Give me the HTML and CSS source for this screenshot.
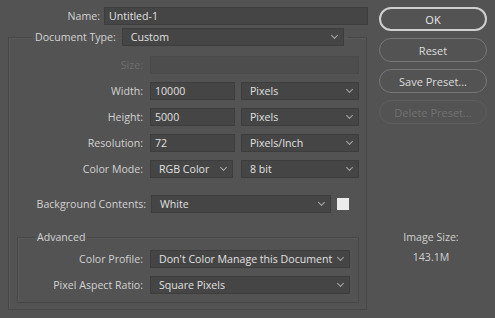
FILE: index.html
```html
<!DOCTYPE html>
<html lang="en">
<head>
    <meta charset="UTF-8">
    <title>New Document</title>
    <link rel="stylesheet" href="styles.css">
</head>
<body>
    <div class="dialog">
        <div class="main">
            <div class="name-row">
                <span class="label">Name:</span>
                <div class="field">Untitled-1</div>
            </div>
            <fieldset class="group">
                <legend class="group-title">
                    <span class="label">Document Type:</span>
                    <div class="select doc-type">Custom</div>
                </legend>
                <div class="row">
                    <span class="label disabled">Size:</span>
                    <div class="field disabled wide"></div>
                </div>
                <div class="row">
                    <span class="label">Width:</span>
                    <div class="field small">10000</div>
                    <div class="select unit">Pixels</div>
                </div>
                <div class="row">
                    <span class="label">Height:</span>
                    <div class="field small">5000</div>
                    <div class="select unit">Pixels</div>
                </div>
                <div class="row">
                    <span class="label">Resolution:</span>
                    <div class="field small">72</div>
                    <div class="select unit">Pixels/Inch</div>
                </div>
                <div class="row">
                    <span class="label">Color Mode:</span>
                    <div class="select mode">RGB Color</div>
                    <div class="select unit">8 bit</div>
                </div>
                <div class="row bg-row">
                    <span class="label">Background Contents:</span>
                    <div class="select bg">White</div>
                    <div class="swatch"></div>
                </div>
                <fieldset class="group advanced">
                    <legend class="adv-title">Advanced</legend>
                    <div class="row adv-row">
                        <span class="label">Color Profile:</span>
                        <div class="select adv">Don't Color Manage this Document</div>
                    </div>
                    <div class="row adv-row">
                        <span class="label">Pixel Aspect Ratio:</span>
                        <div class="select adv">Square Pixels</div>
                    </div>
                </fieldset>
            </fieldset>
        </div>
        <div class="side">
            <button class="btn primary">OK</button>
            <button class="btn">Reset</button>
            <button class="btn">Save Preset...</button>
            <button class="btn disabled">Delete Preset...</button>
            <div class="image-size">
                <div>Image Size:</div>
                <div class="size-value">143.1M</div>
            </div>
        </div>
    </div>
</body>
</html>
```

FILE: styles.css
```css
body {
    margin: 0;
    width: 495px;
    height: 318px;
    overflow: hidden;
    background-color: #535353;
    font-family: "Open Sans", "Liberation Sans", sans-serif;
    font-size: 10.6px;
    color: #d2d2d2;
}

.dialog {
    display: flex;
    padding: 7px 8px 0 8px;
}

.main {
    width: 360px;
}

.label {
    text-align: right;
    white-space: nowrap;
}

.label.disabled {
    color: #6e6e6e;
}

.name-row {
    display: flex;
    align-items: center;
    gap: 4px;
    height: 18px;
}

.name-row .label {
    width: 92px;
}

.name-row .field {
    flex-grow: 1;
}

.field,
.select {
    box-sizing: border-box;
    height: 18px;
    line-height: 16px;
    padding: 0 4px;
    background-color: #454545;
    border: 1px solid #3d3d3d;
    color: #e0e0e0;
    white-space: nowrap;
    overflow: hidden;
}

.field.disabled {
    background-color: #4d4d4d;
    border-color: #4a4a4a;
}

.select {
    display: flex;
    align-items: center;
    padding: 0 6px 0 8px;
}

.select::after {
    content: "";
    width: 4px;
    height: 4px;
    margin-left: auto;
    margin-top: -3px;
    border-right: 1px solid #a8a8a8;
    border-bottom: 1px solid #a8a8a8;
    transform: rotate(45deg);
    flex-shrink: 0;
}

.group {
    margin: 3px 2px 0 0;
    padding: 10px 7px 6px 0;
    border: 1px solid #474747;
    box-shadow: inset 1px 1px 0 #5a5a5a;
}

.group-title {
    display: flex;
    align-items: center;
    gap: 6px;
    margin-left: 24px;
    padding: 0 4px 0 2px;
}

.doc-type {
    width: 222px;
}

.row {
    display: grid;
    grid-template-columns: 134px 85px 117px;
    column-gap: 7px;
    align-items: center;
    height: 18px;
    margin-bottom: 8px;
}

.row .wide {
    grid-column: span 2;
}

.row .mode {
    width: 83px;
}

.row .unit {
    margin-left: -1px;
}

.bg-row {
    grid-template-columns: 137px 180px 12px;
    column-gap: 5px;
    margin-top: 17px;
    margin-bottom: 0;
}

.bg-row .swatch {
    width: 12px;
    height: 12px;
    margin-left: 1px;
    background-color: #ececec;
}

.advanced {
    margin: 16px 0 0 8px;
    padding: 5px 0 0 0;
}

.adv-title {
    margin-left: 17px;
    padding: 0 2px;
    line-height: 16px;
}

.adv-row {
    grid-template-columns: 125px 200px;
}

.side {
    display: flex;
    flex-direction: column;
    gap: 7px;
    margin-left: 11px;
    width: 108px;
}

.btn {
    height: 24px;
    border: 1px solid #767676;
    border-radius: 12px;
    background-color: #535353;
    color: #dcdcdc;
    font-family: inherit;
    font-size: 11px;
    padding: 0;
}

.btn.primary {
    border: 2px solid #cfcfcf;
    color: #e8e8e8;
}

.btn.disabled {
    border-color: #5e5e5e;
    color: #727272;
}

.image-size {
    margin-top: 98px;
    text-align: center;
    line-height: 16px;
    color: #cfcfcf;
    margin-right: 4px;
}

.size-value {
    margin-top: 4px;
}
```
